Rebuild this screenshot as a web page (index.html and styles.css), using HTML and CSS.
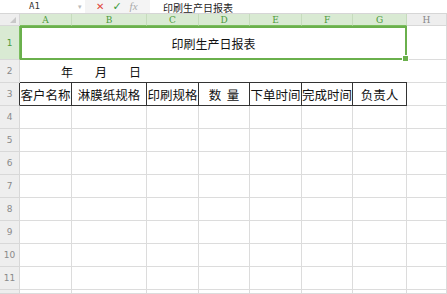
FILE: index.html
```html
<!DOCTYPE html>
<html>

<head>
  <title>印刷生产日报表</title>
  <link rel="stylesheet" href="styles.css">
</head>

<body>
  <div class="formulaBar">
    <div class="nameBox">
      <span class="cellRef">A1</span>
      <span class="caret">▾</span>
    </div>
    <div class="tools">
      <span class="cancel">✕</span>
      <span class="confirm">✓</span>
      <span class="fx">fx</span>
    </div>
    <div class="formulaInput">印刷生产日报表</div>
  </div>

  <div class="sheet">
    <!-- column headers -->
    <div class="corner"><span class="cornerMark"></span></div>
    <div class="colHead active">A</div>
    <div class="colHead active">B</div>
    <div class="colHead active">C</div>
    <div class="colHead active">D</div>
    <div class="colHead active">E</div>
    <div class="colHead active">F</div>
    <div class="colHead active">G</div>
    <div class="colHead">H</div>

    <!-- row 1: merged title -->
    <div class="rowHead active">1</div>
    <div class="cell title">印刷生产日报表</div>
    <div class="cell"></div>

    <!-- row 2: date -->
    <div class="rowHead">2</div>
    <div class="cell date">
      <span>年</span><span>月</span><span>日</span>
    </div>
    <div class="cell"></div>

    <!-- row 3: table head -->
    <div class="rowHead boxed">3</div>
    <div class="cell head">客户名称</div>
    <div class="cell head">淋膜纸规格</div>
    <div class="cell head">印刷规格</div>
    <div class="cell head">数&nbsp;&nbsp;量</div>
    <div class="cell head">下单时间</div>
    <div class="cell head">完成时间</div>
    <div class="cell head">负责人</div>
    <div class="cell"></div>
  </div>

  <div class="sheet body" id="rows"></div>

  <script src="rows.js"></script>
</body>

</html>
```

FILE: rows.js
```js
const rowsDiv = document.querySelector("#rows");

// row 12 only peeks in at the bottom, so it gets no number
for (let i = 4; i <= 12; i++) {
  const head = document.createElement("div");
  head.className = "rowHead";
  head.textContent = i < 12 ? i : "";
  rowsDiv.appendChild(head);
  for (let c = 0; c < 8; c++) {
    const cell = document.createElement("div");
    cell.className = "cell";
    rowsDiv.appendChild(cell);
  }
}
```

FILE: styles.css
```css
body {
  margin: 0;
  font-family: "Noto Sans CJK SC", "Noto Sans", sans-serif;
  background: #fff;
  overflow: hidden;
  width: 447px;
  height: 294px;
}

.formulaBar {
  display: flex;
  height: 14px;
  box-sizing: border-box;
  border-bottom: 1px solid #d6d6d6;
  font-size: 10px;
}

.nameBox {
  width: 85px;
  display: flex;
  justify-content: space-between;
  padding: 0 3px 0 29px;
  box-sizing: border-box;
  color: #333;
  line-height: 13px;
}

.cellRef {
  font-family: "DejaVu Sans Mono", monospace;
  font-size: 9px;
}

.caret {
  color: #bbb;
  font-size: 7px;
}

.tools {
  width: 65px;
  display: flex;
  gap: 8px;
  padding-left: 11px;
  box-sizing: border-box;
  background: #f4f4f4;
  line-height: 13px;
}

.cancel {
  color: #e0463a;
  font-family: "DejaVu Sans", sans-serif;
  font-size: 10px;
}

.confirm {
  color: #3a9a3a;
  font-family: "DejaVu Sans", sans-serif;
  font-size: 11px;
  font-weight: bold;
}

.fx {
  color: #aaa;
  font-family: "Liberation Serif", serif;
  font-style: italic;
  font-size: 11px;
}

.formulaInput {
  flex-grow: 1;
  padding-left: 13px;
  color: #222;
  font-size: 10px;
  line-height: normal;
}

.sheet {
  display: grid;
  grid-template-columns: 20px 52px 75px 52px 51px 52px 51px 54px 1fr;
  grid-template-rows: 12px 34px 23px 23px;
}

.sheet.body {
  grid-template-rows: repeat(8, 23px) 4px;
}

.corner,
.colHead,
.rowHead {
  background: #eeeeee;
  color: #888;
  font-family: "DejaVu Serif", serif;
  font-size: 9px;
  display: flex;
  align-items: center;
  justify-content: center;
  box-sizing: border-box;
  border-right: 1px solid #d8d8d8;
  border-bottom: 1px solid #d8d8d8;
}

.corner {
  position: relative;
}

.cornerMark {
  position: absolute;
  right: 3px;
  bottom: 2px;
  border-left: 6px solid transparent;
  border-bottom: 6px solid #c8c8c8;
}

.colHead.active {
  background: #d9ead3;
  color: #4c9a3b;
  border-right-color: #c6dcbd;
  border-bottom: 1px solid #7bbd5e;
}

.rowHead {
  font-family: "DejaVu Sans", sans-serif;
  font-size: 9px;
  color: #8a8a8a;
}

.rowHead.active {
  background: #d9ead3;
  color: #4c9a3b;
  border-right: 1px solid #7bbd5e;
}

.cell {
  box-sizing: border-box;
  border-right: 1px solid #dcdcdc;
  border-bottom: 1px solid #dcdcdc;
  font-size: 12px;
  color: #111;
  display: flex;
  align-items: center;
  justify-content: center;
}

.title {
  grid-column: span 7;
  border: 2px solid #6ab04c;
  position: relative;
}

.title::after {
  content: "";
  position: absolute;
  right: -4px;
  bottom: -4px;
  width: 5px;
  height: 5px;
  background: #6ab04c;
  border: 1px solid #fff;
}

.date {
  grid-column: span 7;
  justify-content: flex-start;
  gap: 22px;
  padding-left: 41px;
  border-right: none;
  border-bottom: 1px solid #333;
}

.head {
  border-right: 1px solid #333;
  border-bottom: 1px solid #333;
  font-size: 12.5px;
}

.rowHead.boxed {
  border-right: 1px solid #333;
}
```
